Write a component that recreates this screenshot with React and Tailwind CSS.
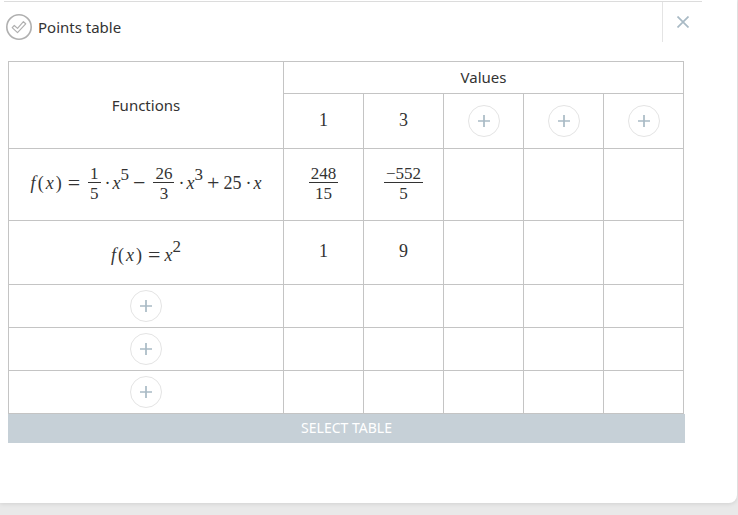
import clsx from 'clsx';

const inputs = ['1', '3', null, null, null];

function Frac({ top, bottom }) {
  return (
    <span className="inline-flex flex-col items-center pt-1 align-middle text-[17px]">
      <span className="border-b border-[#333] px-0.5 leading-4">{top}</span>
      <span className="pt-0.5 leading-[18px]">{bottom}</span>
    </span>
  );
}

function Power({ exp }) {
  return (
    <span className="flex">
      <i>x</i>
      <span className="-mt-2 text-[17px]">{exp}</span>
    </span>
  );
}

function Op({ children, className }) {
  return <span className={clsx('text-[22px]', className)}>{children}</span>;
}

function Dot() {
  return <span className="mr-0.5 ml-1">·</span>;
}

function Fx() {
  return (
    <span className="flex gap-0.5">
      <i>f</i>
      <span>(</span>
      <i>x</i>
      <span>)</span>
    </span>
  );
}

const functions = [
  {
    id: 'quintic',
    height: 'h-[72px]',
    align: 'pb-1',
    formula: (
      <>
        <Fx />
        <Op className="mr-2 ml-1.5">=</Op>
        <Frac top="1" bottom="5" />
        <Dot />
        <Power exp="5" />
        <Op className="mr-2 ml-1">−</Op>
        <Frac top="26" bottom="3" />
        <Dot />
        <Power exp="3" />
        <Op className="mx-1">+</Op>
        <span>25</span>
        <Dot />
        <i>x</i>
      </>
    ),
    values: [<Frac top="248" bottom="15" />, <Frac top="−552" bottom="5" />, null, null, null],
  },
  {
    id: 'square',
    height: 'h-16',
    align: 'pt-1',
    formula: (
      <>
        <Fx />
        <Op className="mr-1 ml-1.5">=</Op>
        <Power exp="2" />
      </>
    ),
    values: ['1', '9', null, null, null],
  },
];

function AddButton({ label }) {
  return (
    <button
      type="button"
      aria-label={label}
      className="inline-flex size-8 items-center justify-center rounded-full border border-[#e4e4e4] align-middle text-[#a9bac5]"
    >
      <svg viewBox="0 0 12 12" className="size-3" fill="none" stroke="currentColor" strokeWidth="1.7">
        <path d="M6 0v12M0 6h12" />
      </svg>
    </button>
  );
}

const cell = 'border-r border-b border-[#c4c4c4] text-center align-middle font-normal';
const math = 'font-["Liberation_Serif",serif] text-lg leading-5';

export default function App() {
  return (
    <div className='min-h-screen bg-[#e9e9e9] font-["Noto_Sans","Open_Sans",sans-serif] text-[15px] text-[#333]'>
      <main className="mr-px rounded-br-lg bg-white pt-px pb-[60px] shadow-[0_1px_4px_rgba(0,0,0,0.1)]">
        <header className="mr-[35px] ml-1 flex h-[41px] border-t border-[#dcdcdc]">
          <div className="flex flex-1 items-center gap-1.5 pt-2.5 pl-0.5">
            <svg viewBox="0 0 26 26" className="size-[26px]" fill="none" stroke="#b0b0b0">
              <circle cx="13" cy="13" r="12.2" strokeWidth="1.6" />
              <path d="M6.2 13.6l2.1-2.1 3.2 2.9 5.9-6.7 2.3 2.1-8.2 8.8z" strokeWidth="1.2" strokeLinejoin="round" />
            </svg>
            <h1>Points table</h1>
          </div>
          <button
            type="button"
            aria-label="Close"
            className="flex w-10 items-center justify-center border-l border-[#e4e4e4] text-[#a9bac5]"
          >
            <svg viewBox="0 0 12 12" className="size-3" fill="none" stroke="currentColor" strokeWidth="1.7">
              <path d="M0.5 0.5l11 11M11.5 0.5L0.5 11.5" />
            </svg>
          </button>
        </header>

        <div className="mt-[19px] mr-[52px] ml-2">
          <div className="pr-px">
            <table className="w-full table-fixed border-separate border-spacing-0 border-t border-l border-[#c4c4c4]">
              <colgroup>
                <col className="w-[275px]" />
                {inputs.map((_, i) => (
                  <col key={i} />
                ))}
              </colgroup>
              <thead>
                <tr className="h-8">
                  <th rowSpan={2} className={cell}>Functions</th>
                  <th colSpan={5} className={cell}>Values</th>
                </tr>
                <tr className="h-[55px]">
                  {inputs.map((value, i) => (
                    <th key={i} className={clsx(cell, math, value && 'pb-0.5')}>
                      {value ?? <AddButton label="Add value" />}
                    </th>
                  ))}
                </tr>
              </thead>
              <tbody>
                {functions.map((fn) => (
                  <tr key={fn.id} className={fn.height}>
                    <th scope="row" className={clsx(cell, math, fn.align)}>
                      <span className="flex items-center justify-center">{fn.formula}</span>
                    </th>
                    {fn.values.map((value, i) => (
                      <td key={i} className={clsx(cell, math, 'pb-1')}>{value}</td>
                    ))}
                  </tr>
                ))}
                {[1, 2, 3].map((row) => (
                  <tr key={row} className="h-[43px]">
                    <td className={cell}>
                      <AddButton label="Add function" />
                    </td>
                    {inputs.map((_, i) => (
                      <td key={i} className={cell} />
                    ))}
                  </tr>
                ))}
              </tbody>
            </table>
          </div>
          <button type="button" className="block h-[29px] w-full bg-[#c6d0d7] pb-0.5 text-sm text-white">
            SELECT TABLE
          </button>
        </div>
      </main>
    </div>
  );
}
